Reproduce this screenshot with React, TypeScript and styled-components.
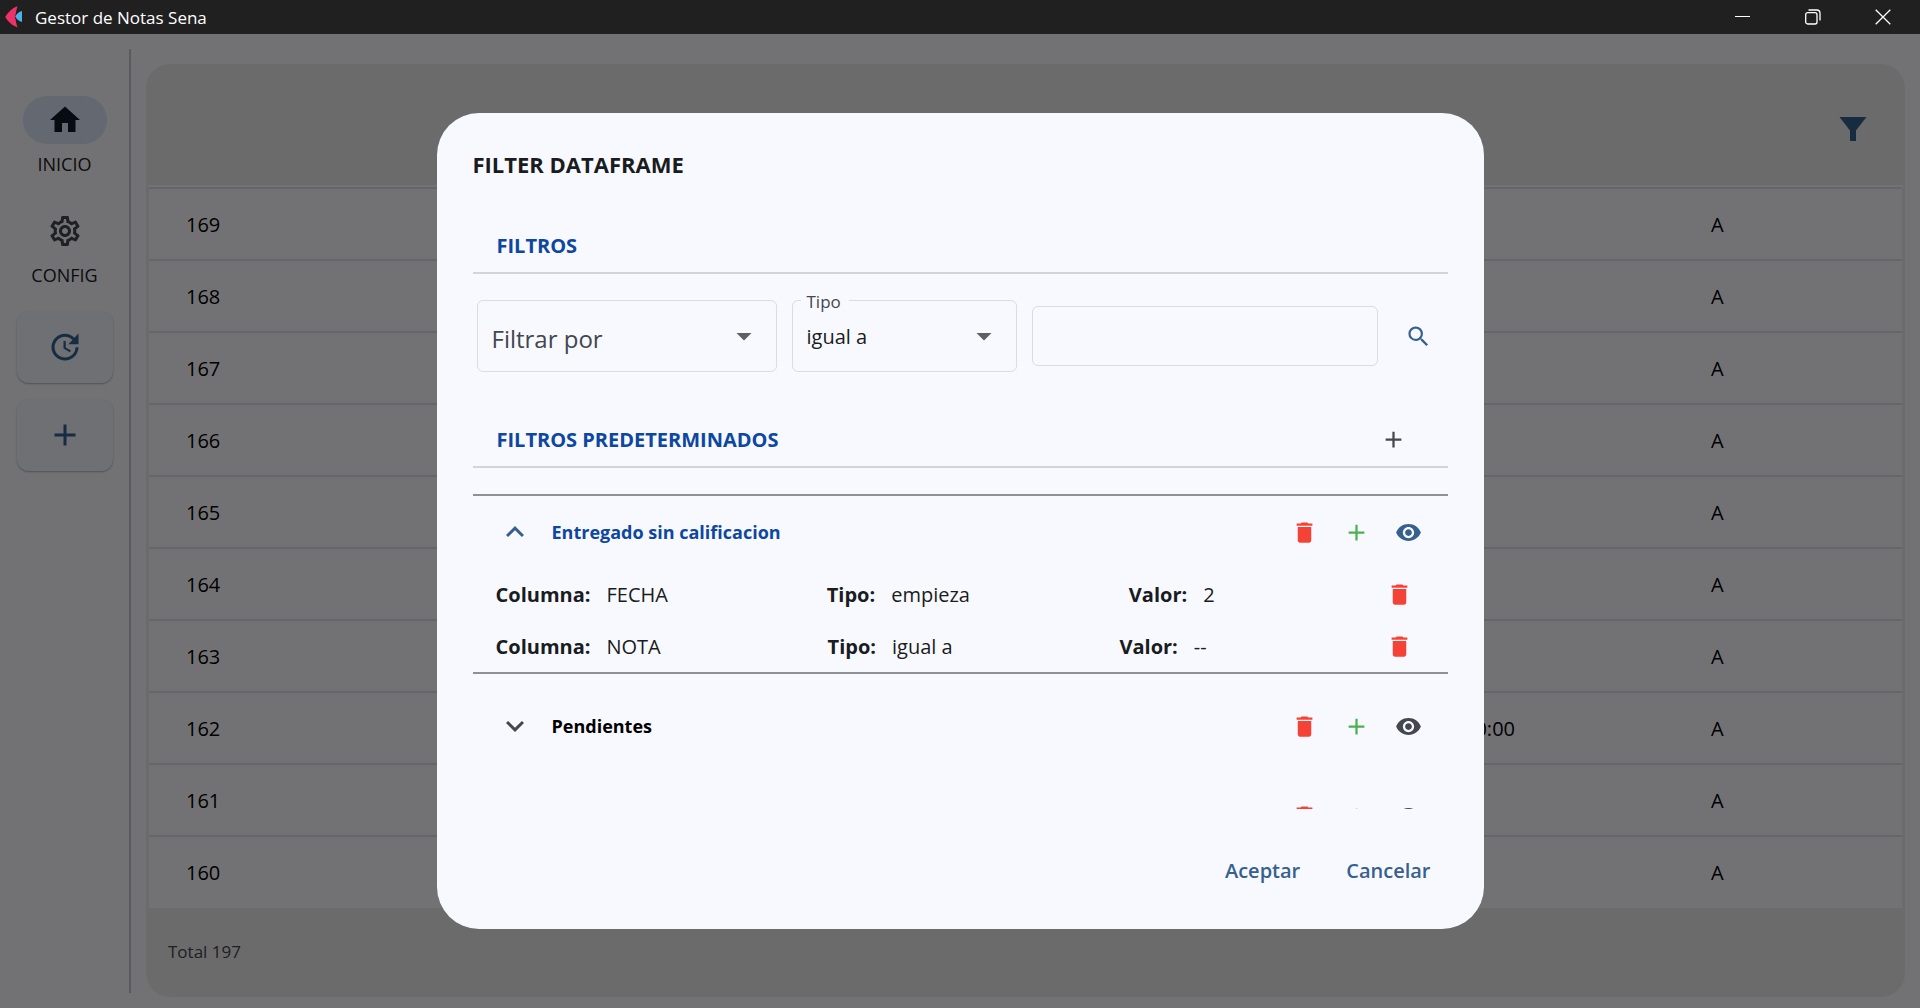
import React, { useState } from 'react';
import styled, { createGlobalStyle } from 'styled-components';
import {
  MdAdd,
  MdArrowDropDown,
  MdDelete,
  MdExpandLess,
  MdExpandMore,
  MdHome,
  MdOutlineSettings,
  MdRemoveRedEye,
  MdSearch,
  MdUpdate,
} from 'react-icons/md';

const color = {
  surface: '#f8f9ff',
  text: '#191c20',
  muted: '#43474e',
  primary: '#36618e',
  heading: '#0d47a1',
  divider: '#d0d4db',
  outline: '#8e9197',
  field: '#dadce1',
  danger: '#f44336',
  success: '#4caf50',
};

const GlobalStyle = createGlobalStyle`
  * { box-sizing: border-box; }
  body {
    margin: 0;
    font-family: 'Open Sans', 'Noto Sans', sans-serif;
    font-size: 20px;
    color: ${color.text};
    background: ${color.surface};
  }
  button, input, select { font: inherit; color: inherit; }
`;

const Window = styled.div`
  display: flex;
  flex-direction: column;
  height: 100vh;
  overflow: hidden;
`;

const TitleBar = styled.header`
  display: flex;
  align-items: center;
  flex: none;
  height: 34px;
  padding: 0 2px 0 4px;
  background: #202020;
  color: #fff;
  font-size: 17px;
`;

const AppName = styled.span`
  flex: 1;
  padding-left: 10px;
`;

const WindowButton = styled.button`
  display: grid;
  place-items: center;
  width: 70px;
  height: 34px;
  padding: 0;
  border: 0;
  background: none;
`;

const Workspace = styled.div`
  position: relative;
  display: flex;
  flex: 1;
  min-height: 0;
  padding-right: 15px;
`;

const Rail = styled.nav`
  display: flex;
  flex-direction: column;
  align-items: center;
  flex: none;
  gap: 16px;
  width: 131px;
  margin: 15px 15px 15px 0;
  padding: 47px 0 0;
  border-right: 2px solid #c3c7cf;
`;

const RailLinks = styled.div`
  display: flex;
  flex-direction: column;
  gap: 31px;
  margin-bottom: 8px;
`;

const RailItem = styled.a<{ $active?: boolean }>`
  display: flex;
  flex-direction: column;
  align-items: center;
  gap: 8px;
  color: ${color.text};
  font-size: 18px;
  font-weight: 500;
  line-height: 24px;
  text-decoration: none;

  & > span:first-child {
    display: grid;
    place-items: center;
    width: 84px;
    height: 48px;
    border-radius: 24px;
    color: ${(p) => (p.$active ? '#101c2b' : color.muted)};
    background: ${(p) => (p.$active ? '#d7e3f7' : 'transparent')};
  }
`;

const RailCard = styled.button`
  display: grid;
  place-items: center;
  width: 96px;
  height: 72px;
  padding: 0;
  border: 0;
  border-radius: 12px;
  background: #eff3fb;
  color: ${color.primary};
  box-shadow: 0 1px 2px rgba(0, 0, 0, 0.3);
`;

const Panel = styled.main`
  display: flex;
  flex-direction: column;
  flex: 1;
  min-width: 0;
  margin: 30px 0 11px;
  border-radius: 24px;
  background: #e9e9e9;
`;

const PanelHeader = styled.div`
  display: flex;
  align-items: center;
  justify-content: flex-end;
  flex: none;
  height: 121px;
  padding: 8px 26px 0 0;
`;

const PanelFooter = styled.div`
  display: flex;
  flex: 1;
  align-items: center;
  padding: 0 22px 3px;
  color: ${color.muted};
  font-size: 17px;
`;

const TableFrame = styled.div`
  margin: 0 2px;
  padding: 0 1px;
  border-top: 2px solid ${color.surface};
  background: #ececee;
`;

const Table = styled.table`
  width: 100%;
  border-collapse: collapse;
  table-layout: fixed;
`;

const Row = styled.tr`
  height: 72px;
  border-top: 2px solid #dddfe4;
  background: ${color.surface};
`;

const Cell = styled.td<{ $width?: string }>`
  width: ${(p) => p.$width || 'auto'};
  padding: 0 0 0 37px;
  color: #000;
`;

const Scrim = styled.div`
  position: absolute;
  inset: 0;
  display: flex;
  justify-content: center;
  padding: 79px 24px;
  background: rgba(0, 0, 0, 0.54);
`;

const Dialog = styled.section`
  display: flex;
  flex-direction: column;
  width: 100%;
  max-width: 1047px;
  padding: 35px 36px 29px;
  border-radius: 42px;
  background: ${color.surface};
`;

const DialogTitle = styled.h1`
  margin: 0 0 38px;
  font-size: 22px;
  font-weight: 700;
  line-height: 32px;
`;

const SectionHeader = styled.div`
  display: flex;
  align-items: center;
  justify-content: space-between;
  flex: none;
  height: 56px;
  padding: 0 28px 0 24px;
  border-bottom: 2px solid ${color.divider};
`;

const SectionTitle = styled.h2`
  margin: 0;
  color: ${color.heading};
  font-size: 20px;
  font-weight: 700;
`;

const FilterRow = styled.form`
  display: flex;
  align-items: center;
  gap: 15px;
  margin: 26px 0 40px;
  padding: 0 3px 0 4px;
`;

const SelectBox = styled.div<{ $width: number }>`
  position: relative;
  flex: none;
  width: ${(p) => p.$width}px;

  & > svg {
    position: absolute;
    top: 18px;
    right: 15px;
    color: #5d5f63;
    pointer-events: none;
  }
`;

const Select = styled.select<{ $placeholder?: boolean }>`
  display: block;
  width: 100%;
  height: 72px;
  padding: ${(p) => (p.$placeholder ? '5px 48px 0 14px' : '0 48px 0 14px')};
  border: 1px solid ${color.field};
  border-radius: 6px;
  appearance: none;
  background: transparent;
  color: ${(p) => (p.$placeholder ? color.muted : color.text)};
  font-size: ${(p) => (p.$placeholder ? 24 : 20)}px;
`;

const FloatingLabel = styled.label`
  position: absolute;
  top: -10px;
  left: 9px;
  padding: 0 8px 0 6px;
  background: ${color.surface};
  color: ${color.muted};
  font-size: 17px;
  line-height: 24px;
`;

const TextField = styled.input`
  flex: 1;
  min-width: 0;
  height: 60px;
  padding: 0 14px;
  border: 1px solid ${color.field};
  border-radius: 6px;
  background: transparent;
`;

const IconButton = styled.button<{ $color?: string }>`
  display: grid;
  place-items: center;
  flex: none;
  width: 52px;
  height: 52px;
  padding: 0;
  border: 0;
  background: none;
  color: ${(p) => p.$color || color.muted};
`;

const PresetList = styled.div`
  flex: 1;
  min-height: 0;
  margin-top: 26px;
  overflow-y: auto;
  scrollbar-width: none;
`;

const Preset = styled.section<{ $open: boolean }>`
  margin-bottom: ${(p) => (p.$open ? 7 : 0)}px;
  border: solid ${color.outline};
  border-width: ${(p) => (p.$open ? '2px 0' : '0')};
`;

const PresetHeader = styled.div<{ $open: boolean }>`
  display: flex;
  align-items: center;
  height: ${(p) => (p.$open ? 72 : 90)}px;
  padding: 0 13px 0 24px;
`;

const PresetToggle = styled.button<{ $open: boolean }>`
  display: flex;
  flex: 1;
  align-items: center;
  gap: 19px;
  padding: 0;
  border: 0;
  background: none;
  color: ${(p) => (p.$open ? color.heading : '#000')};
  font-size: 18px;
  font-weight: 700;
  text-align: left;

  & > svg {
    color: ${(p) => (p.$open ? color.primary : color.muted)};
  }
`;

const Rule = styled.div`
  display: flex;
  align-items: center;
  justify-content: space-between;
  height: 52px;
  padding: 0 22px 0 23px;
`;

const Pair = styled.span`
  display: flex;
  gap: 16px;
`;

const Actions = styled.div`
  display: flex;
  flex: none;
  justify-content: flex-end;
  gap: 12px;
  margin-top: 31px;
`;

const TextButton = styled.button`
  height: 60px;
  padding: 0 17px;
  border: 0;
  background: none;
  color: ${color.primary};
  font-weight: 600;
`;

const records = [169, 168, 167, 166, 165, 164, 163, 162, 161, 160].map((id) => ({
  id,
  time: id === 162 ? '00:00:00' : '',
  grade: 'A',
}));

const presets = [
  {
    name: 'Entregado sin calificacion',
    rules: [
      { column: 'FECHA', type: 'empieza', value: '2' },
      { column: 'NOTA', type: 'igual a', value: '--' },
    ],
  },
  { name: 'Pendientes', rules: [] },
  { name: '', rules: [] },
];

function Logo() {
  return (
    <svg width="21" height="24" viewBox="0 0 21 24" aria-hidden="true">
      <path d="M13.500 1.200C12.600 4 12 7 11.600 9.500L10.800 12l.8 2.400c.3 2.600 1 5.400 1.900 8C8 20.500 3.800 16.200 1.200 12 3.800 7.600 8 3 13.500 1.200Z" fill="#ee3167" />
      <path d="M18 6v11c-3-.8-5.500-3-6.800-5.500C12.500 9 15 6.800 18 6Z" fill="#4fb0e6" />
    </svg>
  );
}

function PresetItem({ preset, initiallyOpen }: { preset: (typeof presets)[number]; initiallyOpen: boolean }) {
  const [open, setOpen] = useState(initiallyOpen);
  return (
    <Preset $open={open}>
      <PresetHeader $open={open}>
        <PresetToggle
          $open={open}
          aria-expanded={open}
          aria-label={preset.name || 'Filtro sin nombre'}
          onClick={() => setOpen(!open)}
        >
          {open ? <MdExpandLess size={36} /> : <MdExpandMore size={36} />}
          {preset.name}
        </PresetToggle>
        <IconButton $color={color.danger} aria-label="Eliminar filtro"><MdDelete size={27} /></IconButton>
        <IconButton $color={color.success} aria-label="Agregar regla"><MdAdd size={27} /></IconButton>
        <IconButton $color={open ? color.primary : color.muted} aria-label="Aplicar filtro">
          <MdRemoveRedEye size={27} />
        </IconButton>
      </PresetHeader>
      {open &&
        preset.rules.map((rule) => (
          <Rule key={rule.column}>
            <Pair><b>Columna:</b><span>{rule.column}</span></Pair>
            <Pair><b>Tipo:</b><span>{rule.type}</span></Pair>
            <Pair><b>Valor:</b><span>{rule.value}</span></Pair>
            <IconButton $color={color.danger} aria-label="Eliminar regla"><MdDelete size={27} /></IconButton>
          </Rule>
        ))}
    </Preset>
  );
}

export default function App() {
  return (
    <Window>
      <GlobalStyle />
      <TitleBar>
        <Logo />
        <AppName>Gestor de Notas Sena</AppName>
        <WindowButton aria-label="Minimizar">
          <svg width="16" height="16" viewBox="0 0 16 16" stroke="#fff"><path d="M0 7.500h15" /></svg>
        </WindowButton>
        <WindowButton aria-label="Restaurar">
          <svg width="16" height="16" viewBox="0 0 16 16" fill="none" stroke="#fff" strokeWidth="1.300">
            <rect x="0.700" y="3.700" width="11.300" height="11.300" rx="2" />
            <path d="M3.500 1h8.300A3.200 3.200 0 0 1 15 4.200v7.300" />
          </svg>
        </WindowButton>
        <WindowButton aria-label="Cerrar">
          <svg width="16" height="16" viewBox="0 0 16 16" stroke="#fff" strokeWidth="1.300">
            <path d="M.7.700l14.600 14.600M15.300.700L.700 15.300" />
          </svg>
        </WindowButton>
      </TitleBar>
      <Workspace>
        <Rail>
          <RailLinks>
            <RailItem href="#inicio" $active><span><MdHome size={36} /></span><span>INICIO</span></RailItem>
            <RailItem href="#config"><span><MdOutlineSettings size={36} /></span><span>CONFIG</span></RailItem>
          </RailLinks>
          <RailCard aria-label="Actualizar"><MdUpdate size={36} /></RailCard>
          <RailCard aria-label="Agregar"><MdAdd size={36} /></RailCard>
        </Rail>
        <Panel>
          <PanelHeader>
            <IconButton $color={color.primary} aria-label="Filtrar">
              <svg width="36" height="36" viewBox="0 0 24 24" fill="currentColor">
                <path d="M3 4c2.010 2.590 7 9 7 9v7h4v-7s4.980-6.410 7-9H3z" />
              </svg>
            </IconButton>
          </PanelHeader>
          <TableFrame>
            <Table>
              <tbody>
                {records.map((record) => (
                  <Row key={record.id}>
                    <Cell $width="71.3%">{record.id}</Cell>
                    <Cell $width="15.7%">{record.time}</Cell>
                    <Cell>{record.grade}</Cell>
                  </Row>
                ))}
              </tbody>
            </Table>
          </TableFrame>
          <PanelFooter>Total 197</PanelFooter>
        </Panel>
        <Scrim>
          <Dialog role="dialog" aria-modal="true" aria-labelledby="dialog-title">
            <DialogTitle id="dialog-title">FILTER DATAFRAME</DialogTitle>
            <SectionHeader><SectionTitle>FILTROS</SectionTitle></SectionHeader>
            <FilterRow onSubmit={(event) => event.preventDefault()}>
              <SelectBox $width={300}>
                <Select $placeholder aria-label="Filtrar por" defaultValue="">
                  <option value="">Filtrar por</option>
                  <option>FECHA</option>
                  <option>NOTA</option>
                </Select>
                <MdArrowDropDown size={36} />
              </SelectBox>
              <SelectBox $width={225}>
                <FloatingLabel htmlFor="tipo">Tipo</FloatingLabel>
                <Select id="tipo" defaultValue="igual a">
                  <option>igual a</option>
                  <option>empieza</option>
                </Select>
                <MdArrowDropDown size={36} />
              </SelectBox>
              <TextField aria-label="Valor" />
              <IconButton $color={color.primary} type="submit" aria-label="Buscar"><MdSearch size={27} /></IconButton>
            </FilterRow>
            <SectionHeader>
              <SectionTitle>FILTROS PREDETERMINADOS</SectionTitle>
              <IconButton aria-label="Agregar filtro"><MdAdd size={27} /></IconButton>
            </SectionHeader>
            <PresetList>
              {presets.map((preset, index) => (
                <PresetItem key={index} preset={preset} initiallyOpen={index === 0} />
              ))}
            </PresetList>
            <Actions>
              <TextButton>Aceptar</TextButton>
              <TextButton>Cancelar</TextButton>
            </Actions>
          </Dialog>
        </Scrim>
      </Workspace>
    </Window>
  );
}
